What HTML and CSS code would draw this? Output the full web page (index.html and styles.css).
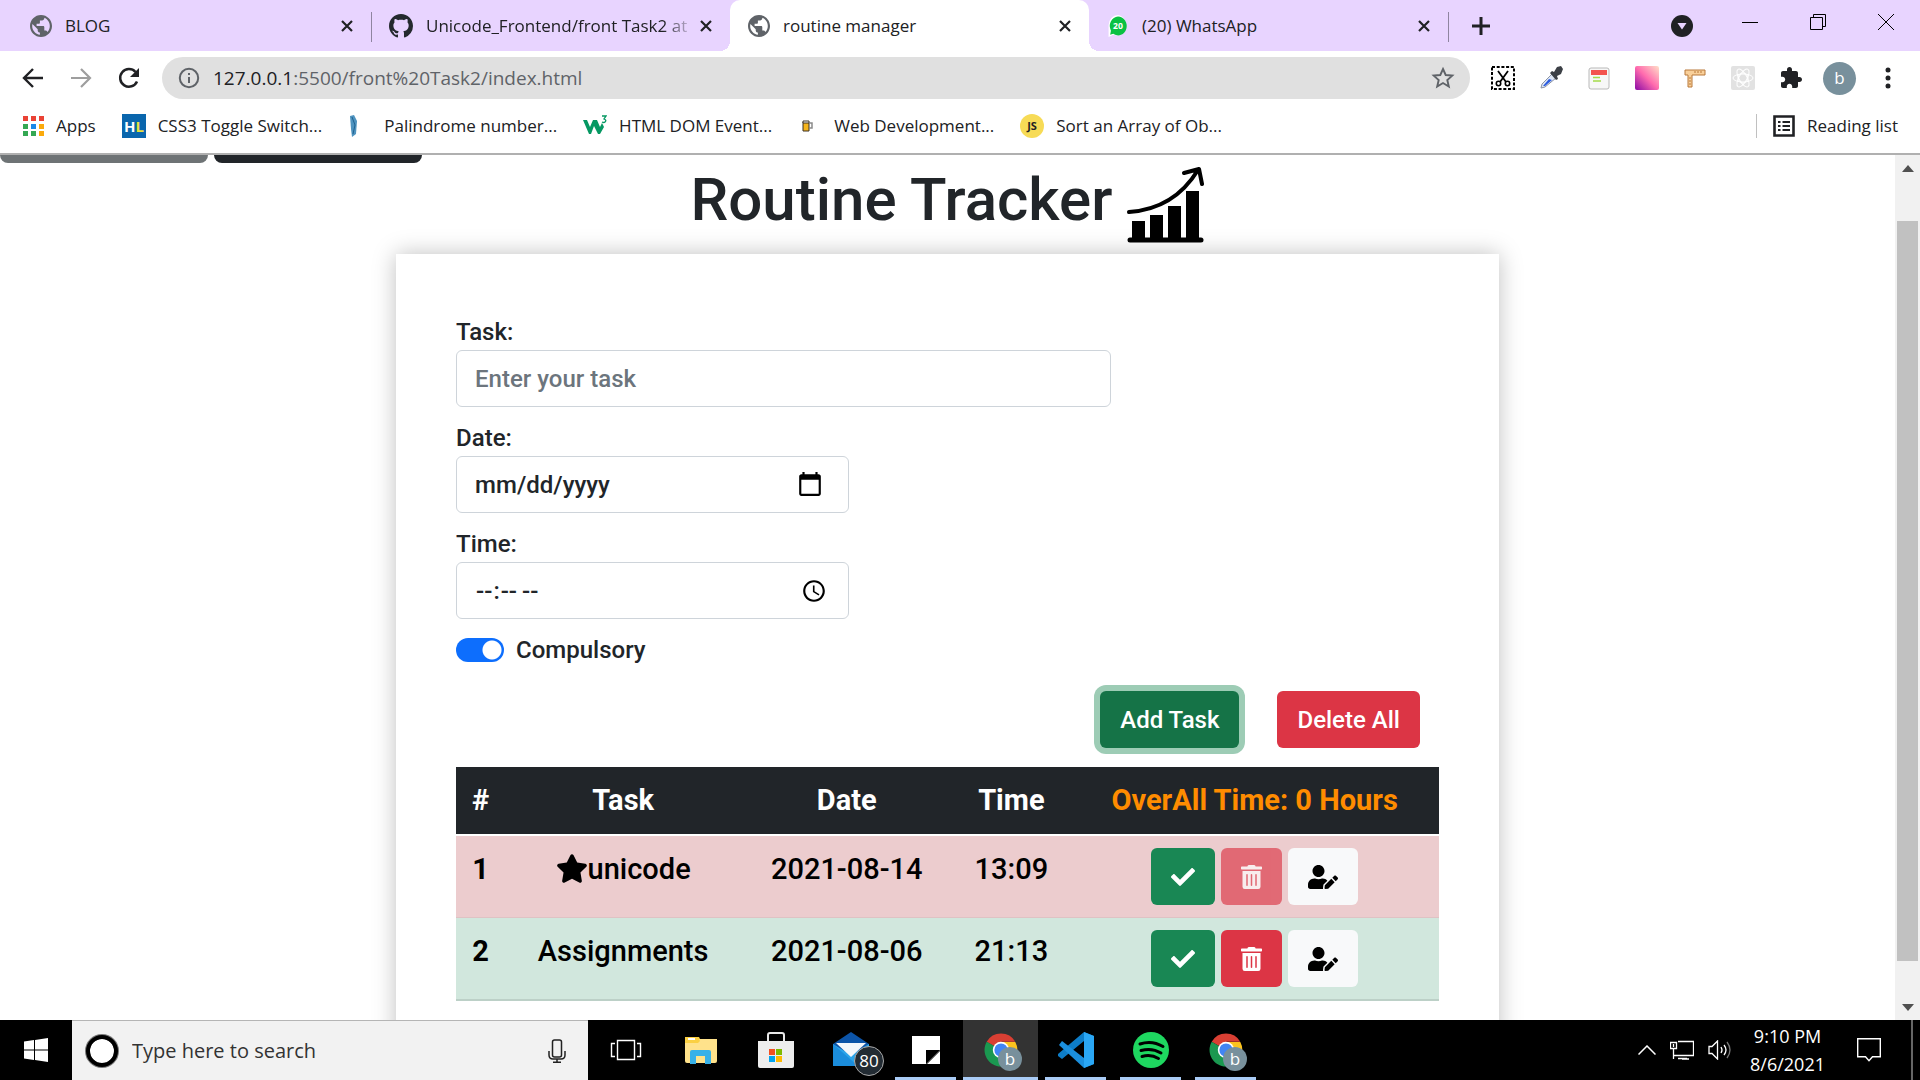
FILE: index.html
```html
<!DOCTYPE html>
<html lang="en">
<head>
<meta charset="utf-8">
<title>routine manager</title>
<link rel="stylesheet" href="styles.css">
</head>
<body>
<svg class="symbols" aria-hidden="true">
  <symbol id="globe" viewBox="2 2 20 20"><path d="M12 2C6.48 2 2 6.48 2 12s4.48 10 10 10 10-4.48 10-10S17.52 2 12 2zm-1 17.93c-3.95-.49-7-3.85-7-7.93 0-.62.08-1.21.21-1.79L9 15v1c0 1.100.9 2 2 2v1.930zm6.900-2.540c-.26-.81-1-1.390-1.900-1.390h-1v-3c0-.55-.45-1-1-1H8v-2h2c.55 0 1-.45 1-1V7h2c1.100 0 2-.9 2-2v-.41c2.930 1.190 5 4.060 5 7.410 0 2.080-.8 3.970-2.100 5.390z"/></symbol>
  <symbol id="x" viewBox="0 0 12 12"><path d="M1 1l10 10M11 1L1 11" fill="none" stroke="currentColor" stroke-width="2.200"/></symbol>
  <symbol id="check" viewBox="0 0 512 512"><path fill="currentColor" d="M173.898 439.404l-166.400-166.400c-9.997-9.997-9.997-26.206 0-36.204l36.203-36.204c9.997-9.998 26.207-9.998 36.204 0L192 312.690 432.095 72.596c9.997-9.997 26.207-9.997 36.204 0l36.203 36.204c9.997 9.997 9.997 26.206 0 36.204l-294.400 294.401c-9.998 9.997-26.207 9.997-36.204-.001z"/></symbol>
  <symbol id="trash" viewBox="0 0 448 512"><path fill="currentColor" d="M32 464a48 48 0 0 0 48 48h288a48 48 0 0 0 48-48V128H32zm272-256a16 16 0 0 1 32 0v224a16 16 0 0 1-32 0zm-96 0a16 16 0 0 1 32 0v224a16 16 0 0 1-32 0zm-96 0a16 16 0 0 1 32 0v224a16 16 0 0 1-32 0zM432 32H312l-9.400-18.700A24 24 0 0 0 281.100 0H166.800a23.720 23.720 0 0 0-21.400 13.300L136 32H16A16 16 0 0 0 0 48v32a16 16 0 0 0 16 16h416a16 16 0 0 0 16-16V48a16 16 0 0 0-16-16z"/></symbol>
  <symbol id="edit" viewBox="0 0 640 512"><path fill="currentColor" d="M224 256c70.700 0 128-57.300 128-128S294.700 0 224 0 96 57.300 96 128s57.300 128 128 128zm89.600 32h-16.700c-22.200 10.200-46.900 16-72.900 16s-50.600-5.800-72.900-16h-16.700C60.200 288 0 348.200 0 422.400V464c0 26.500 21.500 48 48 48h274.900c-2.400-6.800-3.400-14-2.600-21.300l6.800-60.900 1.200-11.100 7.900-7.900 77.300-77.300c-24.500-27.700-60-45.500-99.900-45.500zm45.300 145.300l-6.800 61c-1.100 10.200 7.500 18.800 17.600 17.600l60.900-6.800 137.900-137.900-71.700-71.700-137.900 137.800zM633 268.900L595.100 231c-9.300-9.300-24.500-9.300-33.800 0l-37.800 37.800-4.100 4.100 71.800 71.700 41.800-41.800c9.300-9.400 9.300-24.500 0-33.900z"/></symbol>
  <symbol id="chrome" viewBox="0 0 34 34">
    <path d="M17 17L2.700 8.800A16.500 16.500 0 0 1 31.300 8.800H17z" fill="#d93f33"/>
    <path d="M17 17L2.700 8.800A16.500 16.500 0 0 0 17 33.500l7-12.500z" fill="#1a9850"/>
    <path d="M17 9h14.300A16.500 16.500 0 0 1 17 33.500l7.200-12.400z" fill="#fcc31e"/>
    <circle cx="17" cy="17" r="8.200" fill="#fff"/><circle cx="17" cy="17" r="6.600" fill="#4285f4"/>
  </symbol>
</svg>

<header class="browser">
  <div class="tabs">
    <div class="tab"><svg class="fav"><use href="#globe"/></svg><span class="tab-title">BLOG</span><button class="close" aria-label="Close tab"><svg><use href="#x"/></svg></button></div>
    <div class="tab divided"><svg class="fav big" viewBox="0 0 16 16"><path fill="#24292e" d="M8 0C3.580 0 0 3.580 0 8c0 3.540 2.290 6.530 5.470 7.590.4.070.55-.17.55-.38 0-.19-.010-.82-.010-1.490-2.010.37-2.530-.49-2.690-.94-.090-.23-.48-.94-.82-1.130-.28-.15-.68-.52-.010-.53.63-.010 1.080.58 1.230.82.72 1.210 1.870.87 2.330.66.070-.52.28-.87.51-1.070-1.780-.2-3.640-.89-3.640-3.950 0-.87.31-1.590.82-2.150-.080-.2-.36-1.020.080-2.120 0 0 .67-.21 2.200.82.64-.18 1.320-.27 2-.27s1.360.090 2 .27c1.530-1.040 2.200-.82 2.200-.82.44 1.100.16 1.920.080 2.120.51.56.82 1.270.82 2.150 0 3.070-1.870 3.750-3.650 3.950.29.25.54.73.54 1.480 0 1.070-.010 1.930-.010 2.200 0 .21.15.46.55.38A8.010 8.010 0 0 0 16 8c0-4.420-3.580-8-8-8z"/></svg><span class="tab-title fade">Unicode_Frontend/front Task2 at</span><button class="close" aria-label="Close tab"><svg><use href="#x"/></svg></button></div>
    <div class="tab active"><svg class="fav"><use href="#globe"/></svg><span class="tab-title">routine manager</span><button class="close" aria-label="Close tab"><svg><use href="#x"/></svg></button></div>
    <div class="tab"><svg class="fav" viewBox="0 0 24 28"><path d="M12 0a12 13 0 1 1-6 25L0 28V13A12 13 0 0 1 12 0z" fill="#fff"/><path d="M12 2a11 12 0 1 1-6 22L2 25l1-5A11 12 0 0 1 12 2z" fill="#0ac143"/><text x="12" y="18" text-anchor="middle" font-family="Open Sans, sans-serif" font-weight="700" font-size="11" fill="#fff">20</text></svg><span class="tab-title">(20) WhatsApp</span><button class="close" aria-label="Close tab"><svg><use href="#x"/></svg></button></div>
    <button class="newtab divided" aria-label="New tab"><svg viewBox="0 0 18 18"><path d="M9 0v18M0 9h18" stroke="#202124" stroke-width="3"/></svg></button>
    <div class="window">
      <button aria-label="Search tabs"><svg width="22" height="22" viewBox="0 0 22 22"><circle cx="11" cy="11" r="11" fill="#202124"/><path d="M6.500 8h9L11 14.500z" fill="#e8d4ff"/></svg></button>
      <button class="caption" aria-label="Minimize"><svg width="16" height="16" viewBox="0 0 16 16"><path d="M0 8.500h16" stroke="#000"/></svg></button>
      <button class="caption" aria-label="Restore"><svg width="16" height="16" viewBox="0 0 16 16"><path d="M.5 3.500h12v12H.5zM3.500 3.500v-3h12v12h-3" fill="none" stroke="#000"/></svg></button>
      <button class="caption" aria-label="Close"><svg width="16" height="16" viewBox="0 0 16 16"><path d="M0 0l16 16M16 0L0 16" stroke="#000"/></svg></button>
    </div>
  </div>

  <div class="toolbar">
    <div class="nav">
      <button aria-label="Back"><svg width="24" height="24" viewBox="0 0 24 24"><path d="M22 12H4M12 3l-9 9 9 9" fill="none" stroke="#202124" stroke-width="2.400"/></svg></button>
      <button aria-label="Forward"><svg width="24" height="24" viewBox="0 0 24 24"><path d="M2 12h18M12 3l9 9-9 9" fill="none" stroke="#9e9e9e" stroke-width="2.200"/></svg></button>
      <button aria-label="Reload"><svg width="24" height="24" viewBox="0 0 24 24"><path d="M20 15.500A8.800 8.800 0 1 1 18.500 6" fill="none" stroke="#202124" stroke-width="2.500"/><path d="M22 2v9h-9z" fill="#202124"/></svg></button>
    </div>
    <div class="omnibox">
      <svg width="22" height="22" viewBox="0 0 22 22"><circle cx="11" cy="11" r="9.200" fill="none" stroke="#5f6368" stroke-width="2"/><path d="M11 10v6M11 6v2" stroke="#5f6368" stroke-width="2"/></svg>
      <span class="url"><b>127.0.0.1</b>:5500/front%20Task2/index.html</span>
      <svg width="24" height="24" viewBox="0 0 24 24"><path d="M12 3l2.700 6 6.600.6-5 4.400 1.500 6.500L12 17l-5.800 3.500L7.700 14l-5-4.400 6.600-.6z" fill="none" stroke="#5f6368" stroke-width="1.900"/></svg>
    </div>
    <div class="extensions">
      <svg viewBox="0 0 24 24"><path d="M1 1h22v22H1z" fill="none" stroke="#000" stroke-width="2" stroke-dasharray="3 1.700"/><path d="M7 5l8 11M17 5L9 16" stroke="#000" stroke-width="1.800"/><circle cx="7.500" cy="17.500" r="2.200" fill="none" stroke="#000" stroke-width="1.600"/><circle cx="16.500" cy="17.500" r="2.200" fill="none" stroke="#000" stroke-width="1.600"/></svg>
      <svg viewBox="0 0 24 24"><path d="M2 22l1-4L13 8l4 4L6 21z" fill="#dde6f5" stroke="#8b93a5"/><path d="M4 20l6-7 3 1-7 6z" fill="#2a5be0"/><path d="M11 7l2-2 2 1 3-5 4-1 2 3-2 5-4 2 1 3-2 1z" fill="#3c4046"/></svg>
      <svg viewBox="0 0 24 24"><rect x="2" y="2" width="20" height="21" rx="2" fill="#f7f7f7" stroke="#b9b9b9"/><path d="M4 4h16v5H4z" fill="#f3534f"/><path d="M6 11.500h7M6 15h8" stroke="#a4dc4a" stroke-width="1.600"/></svg>
      <svg viewBox="0 0 24 24"><defs><linearGradient id="pink" x1="0" y1="1" x2="1" y2="0"><stop offset="0" stop-color="#8a0aa5"/><stop offset=".5" stop-color="#ff6bae"/><stop offset="1" stop-color="#ffe0c8"/></linearGradient></defs><rect width="24" height="24" rx="2" fill="url(#pink)"/></svg>
      <svg viewBox="0 0 24 24"><path d="M2 4h20v5H9v12H5V9H2z" fill="#f9d09a" stroke="#b8783a"/><path d="M12 5v2M15 5v2M18 5v2M6 12h2M6 15h2M6 18h2" stroke="#b8783a"/></svg>
      <svg viewBox="0 0 24 24"><rect width="24" height="24" rx="2" fill="#e2e2e2"/><g fill="none" stroke="#fff"><ellipse cx="12" cy="12" rx="10" ry="4"/><ellipse cx="12" cy="12" rx="10" ry="4" transform="rotate(60 12 12)"/><ellipse cx="12" cy="12" rx="10" ry="4" transform="rotate(120 12 12)"/><circle cx="12" cy="12" r="5"/></g></svg>
      <svg viewBox="0 0 24 24"><path fill="#202124" d="M20.500 11H19V7c0-1.100-.9-2-2-2h-4V3.500C13 2.120 11.880 1 10.500 1S8 2.120 8 3.500V5H4c-1.100 0-1.990.9-1.990 2v3.800H3.500c1.490 0 2.700 1.210 2.700 2.700s-1.210 2.700-2.700 2.700H2V20c0 1.100.9 2 2 2h3.800v-1.500c0-1.490 1.210-2.700 2.700-2.700s2.700 1.210 2.700 2.700V22H17c1.100 0 2-.9 2-2v-4h1.500c1.380 0 2.500-1.120 2.500-2.500S21.880 11 20.500 11z"/></svg>
      <button class="avatar" aria-label="Profile">b</button>
      <svg viewBox="0 0 24 24"><g fill="#202124"><circle cx="12" cy="4" r="2.500"/><circle cx="12" cy="12" r="2.500"/><circle cx="12" cy="20" r="2.500"/></g></svg>
    </div>
  </div>

  <nav class="bookmarks">
    <a href="#"><svg width="22" height="24" viewBox="0 0 22 24"><g fill="#ea4335"><path d="M1 2h5v5H1zM9 2h5v5H9zM17 2h5v5h-5z"/></g><path d="M1 10h5v5H1zM1 17h5v5H1zM9 17h5v5H9z" fill="#34a853"/><path d="M9 10h5v5H9z" fill="#1a88e8"/><path d="M17 10h5v5h-5zM17 17h5v5h-5z" fill="#fbaa0c"/></svg>Apps</a>
    <a href="#"><svg width="24" height="24" viewBox="0 0 24 24"><path d="M0 0h24v24H0z" fill="#0a66ad"/><text x="2" y="18" font-family="Open Sans, sans-serif" font-weight="700" font-size="15" fill="#fff">H<tspan fill="#e9e13c">L</tspan></text></svg>CSS3 Toggle Switch...</a>
    <a href="#"><svg width="24" height="24" viewBox="0 0 24 24"><path d="M2 2l4-1 3 6-1 13-4 3-1-8z" fill="#4e93bf"/><path d="M4 3l3 8-2 9" fill="none" stroke="#1f618f"/></svg>Palindrome number...</a>
    <a href="#"><svg width="24" height="24" viewBox="0 0 24 24"><path d="M0 6h4l3 7 3-7h4l3 7 2-4 2 4-4 7h-2l-4-8-3 8H6z" fill="#059862"/><path d="M19 2h4l-2 3q3 1 1 3-1 1-3 0" fill="none" stroke="#059862" stroke-width="1.300"/></svg>HTML DOM Event...</a>
    <a href="#"><svg width="24" height="24" viewBox="0 0 24 24"><path d="M5 8h6v9H5z" fill="#f6b51c" stroke="#3a3027"/><path d="M5 7h6v2H5z" fill="#fff" stroke="#3a3027"/><path d="M11 9h3v5h-3" fill="none" stroke="#8a8a8a" stroke-width="1.500"/></svg>Web Development...</a>
    <a href="#"><svg width="24" height="24" viewBox="0 0 24 24"><circle cx="12" cy="12" r="12" fill="#f7db56"/><text x="12" y="16" text-anchor="middle" font-family="Open Sans, sans-serif" font-weight="700" font-size="11" fill="#222">JS</text></svg>Sort an Array of Ob...</a>
    <a class="reading" href="#"><svg width="22" height="22" viewBox="0 0 22 22"><path d="M1.500 1.500h19v19h-19z" fill="none" stroke="#202124" stroke-width="2.600"/><path d="M5 7h2.500M5 11h2.500M5 15h2.500M9.500 7H17M9.500 11H17M9.500 15H17" stroke="#202124" stroke-width="2"/></svg>Reading list</a>
  </nav>
</header>

<div class="viewport">
  <main class="page">
    <div class="top-actions"><button class="top-btn grey" aria-label="Back"></button><button class="top-btn dark" aria-label="Next"></button></div>
    <h1>Routine Tracker
      <svg width="77" height="80" viewBox="0 0 77 80"><path d="M5 56h13v20H5zM23 50h13v26H23zM41 41h13v35H41zM59 26h13v50H59z" fill="#000"/><path d="M3 75h71" stroke="#000" stroke-width="5" stroke-linecap="round"/><path d="M2 47Q47 44 71 5M57 8l15-4 3 15" fill="none" stroke="#000" stroke-width="4" stroke-linecap="round" stroke-linejoin="round"/></svg>
    </h1>
    <section class="card">
      <form class="form">
        <div class="field wide"><label for="task">Task:</label><input id="task" type="text" placeholder="Enter your task"></div>
        <div class="field"><label for="date">Date:</label><input id="date" type="date"></div>
        <div class="field"><label for="time">Time:</label><input id="time" type="time"></div>
        <div class="switch"><input id="must" type="checkbox" checked><label for="must">Compulsory</label></div>
        <div class="form-actions"><button type="button" class="btn green focused">Add Task</button><button type="button" class="btn red">Delete All</button></div>
      </form>
      <table>
        <colgroup><col class="c-num"><col class="c-task"><col class="c-date"><col class="c-time"><col></colgroup>
        <thead><tr><th>#</th><th>Task</th><th>Date</th><th>Time</th><th class="total">OverAll Time: 0 Hours</th></tr></thead>
        <tbody>
          <tr class="must"><th>1</th><td><svg class="star" viewBox="0 0 576 512"><path d="M259.300 17.800L194 150.200 47.900 171.500c-26.200 3.800-36.700 36.100-17.700 54.600l105.700 103-25 145.500c-4.500 26.300 23.200 46 46.400 33.700L288 439.600l130.700 68.700c23.200 12.200 50.900-7.400 46.400-33.700l-25-145.500 105.700-103c19-18.500 8.500-50.800-17.700-54.600L382 150.200 316.700 17.800c-11.700-23.600-45.600-23.900-57.400 0z"/></svg>unicode</td><td>2021-08-14</td><td>13:09</td>
            <td><div class="actions"><button class="btn done" aria-label="Done"><svg width="24" height="24"><use href="#check"/></svg></button><button class="btn red" disabled aria-label="Delete"><svg width="21" height="24"><use href="#trash"/></svg></button><button class="btn light" aria-label="Edit"><svg width="30" height="24"><use href="#edit"/></svg></button></div></td></tr>
          <tr class="easy"><th>2</th><td>Assignments</td><td>2021-08-06</td><td>21:13</td>
            <td><div class="actions"><button class="btn done" aria-label="Done"><svg width="24" height="24"><use href="#check"/></svg></button><button class="btn red" aria-label="Delete"><svg width="21" height="24"><use href="#trash"/></svg></button><button class="btn light" aria-label="Edit"><svg width="30" height="24"><use href="#edit"/></svg></button></div></td></tr>
        </tbody>
      </table>
    </section>
  </main>
  <div class="scrollbar"><svg width="12" height="7" viewBox="0 0 12 7"><path d="M0 7l6-7 6 7z" fill="#505050"/></svg><div class="thumb"></div><svg width="12" height="7" viewBox="0 0 12 7"><path d="M0 0h12L6 7z" fill="#505050"/></svg></div>
</div>

<footer class="taskbar">
  <button class="start" aria-label="Start"><svg width="24" height="24" viewBox="0 0 24 24"><path d="M0 3.500L10 2v9.500H0zM11 2l13-2v11.500H11zM0 12.500h10V22L0 20.500zM11 12.500h13V24l-13-2z" fill="#fff"/></svg></button>
  <label class="search"><svg width="34" height="34" viewBox="0 0 34 34"><circle cx="17" cy="17" r="14.500" fill="#fff" stroke="#777" stroke-width="5"/><circle cx="17" cy="17" r="14" fill="none" stroke="#000" stroke-width="4"/></svg><input type="text" aria-label="Search" placeholder="Type here to search"><svg width="18" height="24" viewBox="0 0 18 24"><rect x="4.500" y="1" width="9" height="17" rx="2" fill="none" stroke="#222" stroke-width="1.500"/><path d="M1 12v4q0 4 4 4h8q4 0 4-4v-4M9 20v3M5 23.200h8" fill="none" stroke="#222" stroke-width="1.500"/></svg></label>
  <div class="apps">
    <button aria-label="Task view"><svg width="32" height="24" viewBox="0 0 32 24"><path d="M7.500 2.500h17v19h-17zM5 5.500H1.500v13H5M27 5.500h3.500v13H27" fill="none" stroke="#fff" stroke-width="1.400"/></svg></button>
    <button aria-label="File Explorer"><svg width="32" height="28" viewBox="0 0 32 28"><path d="M0 1h14l2 4H0z" fill="#f8cf3c"/><path d="M0 3h32v22q0 2-2 2H2q-2 0-2-2z" fill="#ffe28b"/><path d="M0 1h13l2 4-2 2H0z" fill="#fbd043"/><path d="M3 3h7" stroke="#fff" stroke-width="2"/><path d="M5 28V16q0-2 2-2h17q2 0 2 2v12h-6v-8h-9v8z" fill="#38b1e8"/></svg></button>
    <button aria-label="Store"><svg width="36" height="38" viewBox="0 0 36 38"><path d="M10 12V4q0-2 2-2h12q2 0 2 2v8" fill="none" stroke="#e8e8e8" stroke-width="2"/><path d="M0 10h36v25q0 2-2 2H2q-2 0-2-2z" fill="#ededed"/><path d="M11 18h6v6h-6z" fill="#f25022"/><path d="M18 18h6v6h-6z" fill="#7fba00"/><path d="M11 25h6v6h-6z" fill="#00a4ef"/><path d="M18 25h6v6h-6z" fill="#ffb900"/></svg></button>
    <button aria-label="Mail"><svg width="36" height="36" viewBox="0 0 36 36"><path d="M0 12L18 0l18 12v22H0z" fill="#0c54a8"/><path d="M0 12l18 11 18-11v22H0z" fill="#2aa4ea"/><path d="M3 11h30L18 25z" fill="#f4f7fb"/><path d="M0 12l25 22H0z" fill="#1583d6" opacity=".7"/></svg><span class="count">80</span></button>
    <button aria-label="Notes" class="open"><svg width="28" height="28" viewBox="0 0 28 28"><path d="M0 0h28v14L14 28H0z" fill="#fff"/><path d="M14 14h14L14 28z" fill="#000"/><path d="M28 15v13H15z" fill="#fff"/></svg></button>
    <button aria-label="Chrome" class="open current"><svg width="34" height="34"><use href="#chrome"/></svg><span class="profile">b</span></button>
    <button aria-label="Code" class="open"><svg width="36" height="36" viewBox="0 0 36 36"><path d="M26 0l10 4v28l-10 4V9L4 27l-4-3v-2z" fill="#0d7dc8"/><path d="M26 36L1 13l3-4 22 17z" fill="#1b8fdd"/><path d="M26 0l10 4v28l-10 4z" fill="#2aa7f5"/></svg></button>
    <button aria-label="Spotify" class="open"><svg width="36" height="36" viewBox="0 0 36 36"><circle cx="18" cy="18" r="18" fill="#1ed760"/><path d="M7 12q12-4 23 2.500M8 18.500q11-3 20 2.500M9 24.500q9-2.500 16.500 2" fill="none" stroke="#000" stroke-width="3" stroke-linecap="round"/></svg></button>
    <button aria-label="Chrome window" class="open"><svg width="34" height="34"><use href="#chrome"/></svg><span class="profile">b</span></button>
  </div>
  <div class="tray">
    <svg width="18" height="10" viewBox="0 0 18 10"><path d="M.5 9.500L9 1l8.500 8.500" fill="none" stroke="#fff" stroke-width="1.500"/></svg>
    <svg width="24" height="20" viewBox="0 0 24 20"><path d="M8 1.500h15.500v14H3.500V9M12 19h7M8 18.500h9M3.500 15v4M.5 2.500h6v6h-6zM3.500 4v3" fill="none" stroke="#fff" stroke-width="1.300"/></svg>
    <svg width="24" height="20" viewBox="0 0 24 20"><path d="M1 6.500h3L9.500 1v18L4 13.500H1z" fill="none" stroke="#fff" stroke-width="1.300"/><path d="M13 7q2 3 0 6M16 5q4 5 0 10" fill="none" stroke="#fff" stroke-width="1.300"/><path d="M19 2q6 8 0 16" fill="none" stroke="#777" stroke-width="1.300"/></svg>
    <div class="clock"><span>9:10 PM</span><span>8/6/2021</span></div>
    <svg width="24" height="24" viewBox="0 0 24 24"><path d="M.7.7h22.600v18H15.500l-3.500 4-3.500-4H.7z" fill="none" stroke="#fff" stroke-width="1.400"/></svg>
    <div class="peek"></div>
  </div>
</footer>
</body>
</html>
```
FILE: styles.css
```css
* { box-sizing: border-box; }
body {
  margin: 0;
  height: 100vh;
  display: flex;
  flex-direction: column;
  overflow: hidden;
  background: #fff;
  color: #202124;
  font: 17px/24px "Open Sans", sans-serif;
}
button { border: 0; padding: 0; background: none; font: inherit; color: inherit; }
a { color: inherit; text-decoration: none; }
svg { display: block; flex: none; }
.symbols { position: absolute; width: 0; height: 0; }

/* browser frame */
.browser { flex: none; border-bottom: 2px solid #b0b0b0; }
.tabs { display: flex; height: 51px; background: #e8d4ff; padding-left: 12px; }
.tab { position: relative; flex: 0 1 359px; min-width: 0; display: flex; align-items: center; gap: 13px; padding: 0 18px; }
.tab.active { background: #fff; border-radius: 10px 10px 0 0; }
.tab.active::before, .tab.active::after { content: ""; position: absolute; bottom: 0; width: 10px; height: 10px; }
.tab.active::before { right: 100%; background: radial-gradient(circle at 0 0, transparent 10px, #fff 10px); }
.tab.active::after { left: 100%; background: radial-gradient(circle at 100% 0, transparent 10px, #fff 10px); }
.divided::before { content: ""; position: absolute; left: 0; top: 12px; width: 1px; height: 30px; background: #8f85a0; }
.fav { width: 22px; height: 22px; fill: #5f6368; }
.fav.big { width: 24px; height: 24px; }
.tab-title { flex: 1; min-width: 0; overflow: hidden; white-space: nowrap; }
.tab-title.fade { margin-right: -8px; -webkit-mask-image: linear-gradient(90deg, #000 88%, transparent); mask-image: linear-gradient(90deg, #000 88%, transparent); }
.close svg { width: 12px; height: 12px; }
.newtab { position: relative; width: 66px; display: flex; align-items: center; justify-content: center; }
.newtab svg { width: 18px; height: 18px; }
.window { margin-left: auto; display: flex; align-items: center; }
.window button { width: 68px; height: 43px; display: flex; align-items: center; justify-content: center; }
.window .caption { align-self: flex-start; }

.toolbar { display: flex; align-items: center; height: 54px; padding: 0 20px 0 21px; }
.nav { display: flex; gap: 24px; margin-right: 21px; }
.omnibox { flex: 1; display: flex; align-items: center; gap: 13px; height: 42px; padding: 0 15px 0 16px; border-radius: 21px; background: #e0e0e0; }
.url { flex: 1; font-size: 19px; color: #5f6368; }
.url b { font-weight: 400; color: #202124; }
.extensions { display: flex; align-items: center; gap: 24px; margin-left: 21px; }
.extensions svg { width: 24px; height: 24px; }
.avatar { width: 33px; height: 33px; margin: 0 -4px; border-radius: 50%; background: #78909c; color: #fff; }

.bookmarks { display: flex; align-items: center; height: 48px; padding: 0 22px 6px; gap: 26px; }
.bookmarks a { display: flex; align-items: center; gap: 12px; white-space: nowrap; }
.bookmarks .reading { margin-left: auto; padding-left: 16px; border-left: 1px solid #c0c0c0; }

/* scrolled page */
.viewport { flex: 1; min-height: 0; display: flex; overflow: hidden; }
.page { flex: 1; min-width: 0; font: 500 24px/36px Roboto, sans-serif; color: #212529; }
.top-actions { display: flex; gap: 6px; }
.top-btn { width: 208px; height: 8px; border-radius: 0 0 8px 8px; }
.top-btn.grey { background: #6e7375; }
.top-btn.dark { background: #212529; }
h1 { display: flex; justify-content: center; gap: 15px; margin: 2px 0 9px; font-size: 60px; line-height: 70px; font-weight: 500; }
.card { width: 58.2%; margin: 0 auto; padding: 60px 60px 120px; box-shadow: 0 0 22px rgba(0, 0, 0, .25); }
.field { width: 40%; margin-bottom: 13px; }
.field.wide { width: 66.6%; }
.field label { display: block; }
.field input { display: block; width: 100%; height: 57px; padding: 9px 18px; border: 1px solid #ced4da; border-radius: 6px; background: #fff; font: inherit; color: inherit; }
.field input::placeholder { color: #6c757d; }
input[type="date"]::-webkit-datetime-edit-month-field,
input[type="date"]::-webkit-datetime-edit-day-field,
input[type="date"]::-webkit-datetime-edit-year-field { padding: 0; }
input[type="date"]::-webkit-calendar-picker-indicator { width: 28px; height: 28px; margin-right: 4px; }
input[type="time"]::-webkit-calendar-picker-indicator { width: 26px; height: 26px; }
.switch { display: flex; align-items: center; gap: 12px; }
.switch input { appearance: none; width: 48px; height: 24px; margin: 0; border-radius: 12px; background: radial-gradient(circle at 36px 12px, #fff 9px, #0d6efd 10px); }
.form-actions { display: flex; justify-content: flex-end; gap: 38px; padding: 23px 19px 19px 0; }
.btn { height: 57px; padding: 0 20px; border-radius: 6px; display: flex; align-items: center; color: #fff; }
.green { background: #157347; }
.green.focused { box-shadow: 0 0 0 6px #9dccb5; }
.red { background: #dc3545; }
.red:disabled { opacity: .65; }
.done { background: #198754; }
.light { background: #f8f9fa; color: #000; }

table { width: 100%; table-layout: fixed; border-collapse: separate; border-spacing: 0; font-size: 29px; line-height: 43px; text-align: center; }
.c-num { width: 5%; }
.c-task { width: 24%; }
.c-date { width: 21.5%; }
.c-time { width: 12%; }
th, td { padding: 12px 0; vertical-align: top; white-space: nowrap; }
th { font-weight: 700; }
thead th { background: #212529; color: #fff; border-bottom: 2px solid #fff; }
thead .total { color: #ff8c00; }
tbody { color: #000; }
.must > * { background: #ecccce; border-bottom: 1px solid #dfc2c4; }
.easy > * { background: #d1e7dd; border-bottom: 2px solid #bcd0c7; }
.star { display: inline-block; height: 29px; width: 32px; vertical-align: -4px; }
.actions { display: flex; justify-content: center; gap: 6px; }

.scrollbar { width: 25px; display: flex; flex-direction: column; align-items: center; padding: 10px 2px 9px; background: #f1f1f1; }
.thumb { width: 100%; flex: 1; margin: 49px 0 43px; background: #c1c1c1; }

/* desktop taskbar */
.taskbar { flex: none; height: 60px; display: flex; background: #000; color: #fff; }
.start { width: 72px; display: flex; align-items: center; justify-content: center; }
.search { width: 516px; display: flex; align-items: center; gap: 13px; padding: 0 22px 0 13px; background: #f2f2f2; border-top: 1px solid #b5b5b5; }
.search input { flex: 1; min-width: 0; border: 0; padding: 0; background: none; font: 20px/24px "Open Sans", sans-serif; }
.search input::placeholder { color: #333; }
.apps { display: flex; }
.apps button { position: relative; width: 75px; display: flex; align-items: center; justify-content: center; }
.open::after { content: ""; position: absolute; left: 7px; right: 7px; bottom: 0; height: 3px; background: #a9cbf5; }
.current { background: #333; }
.current::after { left: 0; right: 0; }
.count { position: absolute; left: 41px; top: 26px; width: 30px; height: 30px; border-radius: 50%; border: 1px solid #aaa; background: #222b33; line-height: 28px; }
.profile { position: absolute; left: 35px; top: 27px; width: 24px; height: 24px; border-radius: 50%; background: #78909c; line-height: 24px; }
.tray { margin-left: auto; display: flex; align-items: center; gap: 14px; }
.clock { display: flex; flex-direction: column; align-items: center; gap: 4px; margin: 0 18px 0 4px; font-size: 18px; }
.peek { align-self: stretch; width: 9px; margin-left: 16px; border-left: 2px solid #666; }
```
